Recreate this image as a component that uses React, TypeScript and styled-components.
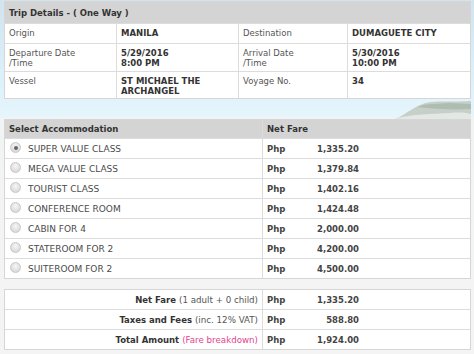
import * as React from 'react';
import styled, { createGlobalStyle } from 'styled-components';

const GlobalStyle = createGlobalStyle`
  body {
    margin: 0;
    font-family: "DejaVu Sans", Verdana, sans-serif;
    font-size: 8.5px;
    color: #444;
  }
`;

const Page = styled.div`
  width: 474px;
  height: 354px;
  padding: 1px 3px 0 4px;
  box-sizing: border-box;
  background: linear-gradient(
    to bottom,
    #d2e4ee 0px,
    #d8eef8 60px,
    #e6f5fc 116px,
    #f2f3f3 119px,
    #f4f4f4 100%
  );
  display: flex;
  flex-direction: column;
  overflow: hidden;
`;

const Grid = styled.div<{ cols: string }>`
  display: grid;
  grid-template-columns: ${(p) => p.cols};
  gap: 1px;
  background: #dcdcdc;
  border: 1px solid #d6d6d6;
`;

const HeadCell = styled.div<{ span?: number }>`
  grid-column: span ${(p) => p.span || 1};
  background: #d4d4d4;
  font-weight: bold;
  color: #333;
  padding: 0 4px;
  display: flex;
  align-items: center;
`;

const TripHead = styled(HeadCell)`
  height: 21px;
`;

const Label = styled.div<{ h?: number }>`
  background: #fff;
  color: #555;
  padding: 4px 4px 0;
  line-height: 10px;
  height: ${(p) => (p.h ? `${p.h}px` : 'auto')};
`;

const Value = styled(Label)`
  color: #333;
  font-weight: bold;
`;

const Gap = styled.div<{ h: number }>`
  height: ${(p) => p.h}px;
  display: flex;
  justify-content: flex-end;
  align-items: flex-end;
  flex-shrink: 0;
`;

const AccHead = styled(HeadCell)`
  height: 18px;
`;

const Cell = styled.div<{ right?: boolean }>`
  background: #fff;
  height: 19px;
  display: flex;
  align-items: center;
  justify-content: ${(p) => (p.right ? 'flex-end' : 'flex-start')};
  padding: 0 4px;
  color: #444;
`;

const RoomName = styled.span`
  font-size: 9px;
  color: #4a4a4a;
`;

const Radio = styled.span<{ checked?: boolean }>`
  width: 9px;
  height: 9px;
  flex-shrink: 0;
  border-radius: 50%;
  border: 1px solid #c8c8c8;
  background: radial-gradient(circle at 50% 35%, #f6f6f6 0, #d6d6d6 85%);
  margin: 0 7px 0 1px;
  position: relative;
  top: -1px;
  display: flex;
  align-items: center;
  justify-content: center;
  &::after {
    content: '';
    width: 4px;
    height: 4px;
    border-radius: 50%;
    background: ${(p) => (p.checked ? '#666' : 'transparent')};
  }
`;

const Price = styled.div`
  display: grid;
  grid-template-columns: 46px 46px;
  font-weight: bold;
  color: #444;
`;

const Amount = styled.span`
  text-align: right;
`;

const Strong = styled.b`
  color: #333;
  margin-right: 3px;
`;

const Note = styled.span`
  font-size: 8.7px;
  color: #555;
`;

const Pink = styled(Note)`
  color: #e6428e;
`;

type TripRow = {
  h: number;
  label: React.ReactNode;
  value: React.ReactNode;
  label2: React.ReactNode;
  value2: React.ReactNode;
};

const trip: TripRow[] = [
  { h: 15, label: 'Origin', value: 'MANILA', label2: 'Destination', value2: 'DUMAGUETE CITY' },
  {
    h: 23,
    label: <>Departure Date<br />/Time</>,
    value: <>5/29/2016<br />8:00 PM</>,
    label2: <>Arrival Date<br />/Time</>,
    value2: <>5/30/2016<br />10:00 PM</>,
  },
  {
    h: 22,
    label: 'Vessel',
    value: <>ST MICHAEL THE<br />ARCHANGEL</>,
    label2: 'Voyage No.',
    value2: '34',
  },
];

const rooms: [string, string][] = [
  ['SUPER VALUE CLASS', '1,335.20'],
  ['MEGA VALUE CLASS', '1,379.84'],
  ['TOURIST CLASS', '1,402.16'],
  ['CONFERENCE ROOM', '1,424.48'],
  ['CABIN FOR 4', '2,000.00'],
  ['STATEROOM FOR 2', '4,200.00'],
  ['SUITEROOM FOR 2', '4,500.00'],
];

const summary = [
  { label: 'Net Fare', note: '(1 adult + 0 child)', amount: '1,335.20' },
  { label: 'Taxes and Fees', note: '(inc. 12% VAT)', amount: '588.80' },
  { label: 'Total Amount', note: '(Fare breakdown)', amount: '1,924.00', link: true },
];

function Island() {
  return (
    <svg width="76" height="21" viewBox="0 0 76 21">
      <path
        d="M0 21 C6 19 10 15 16 12 C22 8 28 5 36 4 C46 3 58 4 76 3 L76 21 Z"
        fill="#c6d0c8"
      />
      <path d="M22 9 C32 5 44 6 54 5 L76 6 L76 11 C58 12 40 11 22 9 Z" fill="#aebcb2" />
      <path d="M3 20 C18 16 36 16 56 15 C66 14 72 15 76 16 L76 21 L0 21 Z" fill="#e4e8e4" />
    </svg>
  );
}

export default function App() {
  const [selected, setSelected] = React.useState(0);

  return (
    <Page>
      <GlobalStyle />
      <Grid cols="111px 121px 108px 1fr">
        <TripHead span={4}>Trip Details - ( One Way )</TripHead>
        {trip.map((row) => (
          <React.Fragment key={row.h}>
            <Label h={row.h}>{row.label}</Label>
            <Value>{row.value}</Value>
            <Label>{row.label2}</Label>
            <Value>{row.value2}</Value>
          </React.Fragment>
        ))}
      </Grid>
      <Gap h={20}>
        <Island />
      </Gap>
      <Grid cols="257px 1fr">
        <AccHead>Select Accommodation</AccHead>
        <AccHead>Net Fare</AccHead>
        {rooms.map(([name, fare], i) => (
          <React.Fragment key={name}>
            <Cell onClick={() => setSelected(i)}>
              <Radio checked={selected === i} />
              <RoomName>{name}</RoomName>
            </Cell>
            <Cell>
              <Price>
                <span>Php</span>
                <Amount>{fare}</Amount>
              </Price>
            </Cell>
          </React.Fragment>
        ))}
      </Grid>
      <Gap h={10} />
      <Grid cols="257px 1fr">
        {summary.map((s) => (
          <React.Fragment key={s.label}>
            <Cell right>
              <Strong>{s.label}</Strong>
              {s.link ? <Pink>{s.note}</Pink> : <Note>{s.note}</Note>}
            </Cell>
            <Cell>
              <Price>
                <span>Php</span>
                <Amount>{s.amount}</Amount>
              </Price>
            </Cell>
          </React.Fragment>
        ))}
      </Grid>
    </Page>
  );
}
